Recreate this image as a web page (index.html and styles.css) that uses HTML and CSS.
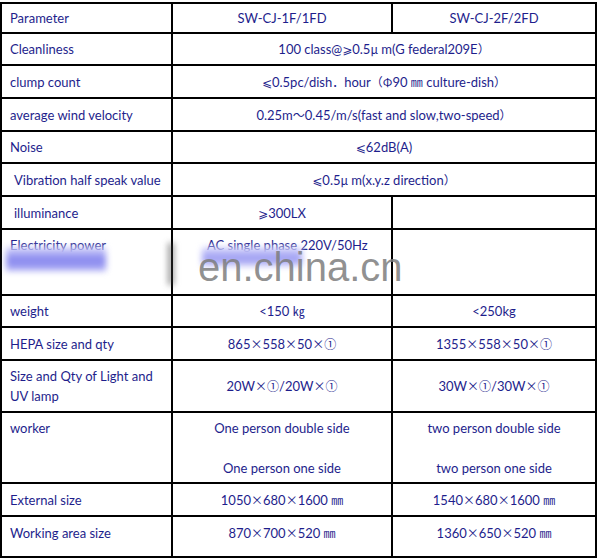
FILE: index.html
```html
<!DOCTYPE html>
<html>
<head>
<meta charset="utf-8">
<link rel="stylesheet" href="styles.css">
</head>
<body>
<div class="page">
<table class="spec">
  <colgroup><col class="c1"><col class="c2"><col class="c3"></colgroup>
  <tr class="h30"><td class="name">Parameter</td><td>SW-CJ-1F/1FD</td><td>SW-CJ-2F/2FD</td></tr>
  <tr class="h32"><td class="name">Cleanliness</td><td colspan="2">100 class@<span class="cj">⩾</span>0.5<span class="cj">μ</span> m(G federal209E<span class="cj">）</span></td></tr>
  <tr class="h33"><td class="name">clump count</td><td colspan="2"><span class="cj">⩽</span>0.5pc/dish<span class="cj">．</span>hour<span class="cj">（Φ</span>90 <span class="cj">㎜</span> culture-dish<span class="cj">）</span></td></tr>
  <tr class="h33"><td class="name">average wind velocity</td><td colspan="2">0.25m<span class="cj">～</span>0.45/m/s(fast and slow,two-speed<span class="cj">）</span></td></tr>
  <tr class="h32"><td class="name">Noise</td><td colspan="2"><span class="cj">⩽</span>62dB(A)</td></tr>
  <tr class="h33"><td class="name ind">Vibration half speak value</td><td colspan="2"><span class="cj">⩽</span>0.5<span class="cj">μ</span> m(x.y.z direction<span class="cj">）</span></td></tr>
  <tr class="h33"><td class="name ind">illuminance</td><td><span class="cj">⩾</span>300LX</td><td></td></tr>
  <tr class="h66 top"><td class="name">Electricity power</td><td class="ac">AC single phase 220V/50Hz</td><td></td></tr>
  <tr class="h32"><td class="name">weight</td><td>&lt;150 <span class="cj">㎏</span></td><td>&lt;250kg</td></tr>
  <tr class="h33"><td class="name">HEPA size and qty</td><td>865<span class="cj">×</span>558<span class="cj">×</span>50<span class="cj">×①</span></td><td>1355<span class="cj">×</span>558<span class="cj">×</span>50<span class="cj">×①</span></td></tr>
  <tr class="h52"><td class="name">Size and Qty of Light and UV lamp</td><td>20W<span class="cj">×①</span>/20W<span class="cj">×①</span></td><td>30W<span class="cj">×①</span>/30W<span class="cj">×①</span></td></tr>
  <tr class="h71 top"><td class="name">worker</td><td>One person double side<br><br>One person one side</td><td>two person double side<br><br>two person one side</td></tr>
  <tr class="h33"><td class="name">External size</td><td>1050<span class="cj">×</span>680<span class="cj">×</span>1600 <span class="cj">㎜</span></td><td>1540<span class="cj">×</span>680<span class="cj">×</span>1600 <span class="cj">㎜</span></td></tr>
  <tr class="h41 last"><td class="name">Working area size</td><td>870<span class="cj">×</span>700<span class="cj">×</span>520 <span class="cj">㎜</span></td><td>1360<span class="cj">×</span>650<span class="cj">×</span>520 <span class="cj">㎜</span></td></tr>
</table>
<div class="blob b1"></div>
<div class="blob b2"></div>
<div class="blob b3"></div>
<div class="mark">en.china.cn</div>
</div>
</body>
</html>
```

FILE: styles.css
```css
html, body {
  margin: 0;
  padding: 0;
  background: #fff;
}
.page {
  position: relative;
  width: 597px;
  height: 560px;
  overflow: hidden;
}
.spec {
  margin-top: 2px;
  width: 595px;
  border-collapse: collapse;
  table-layout: fixed;
  border: 2px solid #000;
  font-family: Lato, "Noto Sans CJK SC", "DejaVu Sans", sans-serif;
  font-size: 13px;
  color: #1e1e8c;
}
.cj {
  font-family: "Noto Sans CJK SC", "DejaVu Sans", sans-serif;
  font-size: 12px;
}
.c1 { width: 171px; }
.c2 { width: 220px; }
.c3 { width: 204px; }
.spec td {
  border: 2px solid #000;
  padding: 0 8px;
  text-align: center;
  vertical-align: middle;
  line-height: 20px;
  white-space: nowrap;
}
.spec td.name {
  text-align: left;
  white-space: normal;
}
.spec td.ind { padding-left: 12px; }
.spec tr.top td {
  vertical-align: top;
  padding-top: 5px;
}
.spec td.ac { text-align: left; padding-left: 34px; }
.h30 { height: 30px; }
.h32 { height: 32px; }
.h33 { height: 33px; }
.h41 { height: 41px; }
.h52 { height: 52px; }
.h66 { height: 66px; }
.h71 { height: 71px; }
.last td { vertical-align: top; padding-top: 6px; }

.blob {
  position: absolute;
  filter: blur(3px);
}
.b1 {
  left: 6px; top: 247px; width: 100px; height: 24px;
  background: linear-gradient(#d8d8fb, #8484ee 55%, #b4b4f6);
}
.b2 {
  left: 202px; top: 247px; width: 100px; height: 19px;
  background: linear-gradient(#dcdcfc, #9a9af2 60%, #c8c8f8);
}
.b3 { left: 168px; top: 243px; width: 6px; height: 42px; background: rgba(70, 70, 70, 0.55); }
.mark {
  position: absolute;
  left: 198px;
  top: 244px;
  font-family: "Liberation Sans", Arial, sans-serif;
  font-size: 40px;
  line-height: 46px;
  color: rgba(125, 125, 125, 0.85);
}
```
